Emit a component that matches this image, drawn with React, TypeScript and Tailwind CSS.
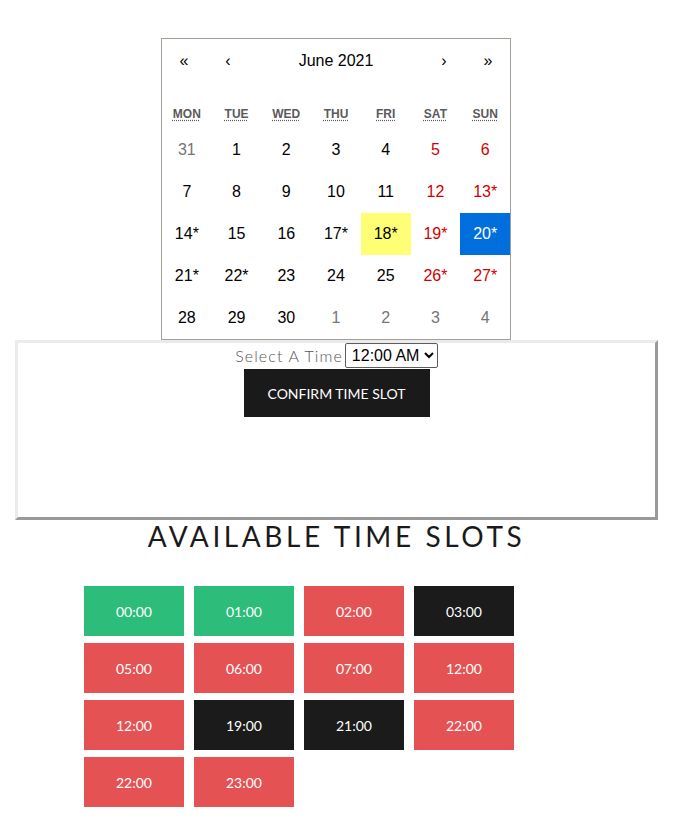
import React from "react";

type Day = { n: number; star?: boolean; muted?: boolean; weekend?: boolean; now?: boolean; active?: boolean };

const weeks: Day[][] = [
  [{ n: 31, muted: true }, { n: 1 }, { n: 2 }, { n: 3 }, { n: 4 }, { n: 5, weekend: true }, { n: 6, weekend: true }],
  [{ n: 7 }, { n: 8 }, { n: 9 }, { n: 10 }, { n: 11 }, { n: 12, weekend: true }, { n: 13, weekend: true, star: true }],
  [
    { n: 14, star: true },
    { n: 15 },
    { n: 16 },
    { n: 17, star: true },
    { n: 18, star: true, now: true },
    { n: 19, weekend: true, star: true },
    { n: 20, weekend: true, star: true, active: true },
  ],
  [
    { n: 21, star: true },
    { n: 22, star: true },
    { n: 23 },
    { n: 24 },
    { n: 25 },
    { n: 26, weekend: true, star: true },
    { n: 27, weekend: true, star: true },
  ],
  [{ n: 28 }, { n: 29 }, { n: 30 }, { n: 1, muted: true }, { n: 2, muted: true }, { n: 3, muted: true }, { n: 4, muted: true }],
];

const weekdays = [
  ["MON", "Monday"],
  ["TUE", "Tuesday"],
  ["WED", "Wednesday"],
  ["THU", "Thursday"],
  ["FRI", "Friday"],
  ["SAT", "Saturday"],
  ["SUN", "Sunday"],
];

const slots: { time: string; status: "free" | "taken" | "mine" }[] = [
  { time: "00:00", status: "free" },
  { time: "01:00", status: "free" },
  { time: "02:00", status: "taken" },
  { time: "03:00", status: "mine" },
  { time: "05:00", status: "taken" },
  { time: "06:00", status: "taken" },
  { time: "07:00", status: "taken" },
  { time: "12:00", status: "taken" },
  { time: "12:00", status: "taken" },
  { time: "19:00", status: "mine" },
  { time: "21:00", status: "mine" },
  { time: "22:00", status: "taken" },
  { time: "22:00", status: "taken" },
  { time: "23:00", status: "taken" },
];

const slotColor = {
  free: "bg-[#2cbd7a]",
  taken: "bg-[#e55254]",
  mine: "bg-[#1b1b1b]",
};

function dayClass(d: Day) {
  if (d.active) return "bg-[#006edc] text-white";
  if (d.now) return "bg-[#ffff76] text-black";
  if (d.muted) return "text-[#757575]";
  if (d.weekend) return "text-[#d10000]";
  return "text-black";
}

const Calendar = () => (
  <div className="ml-[161px] w-[350px] border border-[#a0a096] bg-white font-['Liberation_Sans',Arial,sans-serif]">
    <div className="mb-4 flex h-[44px] text-[16px] text-black">
      <button className="w-[44px]">«</button>
      <button className="w-[44px]">‹</button>
      <button className="flex-1">June 2021</button>
      <button className="w-[44px]">›</button>
      <button className="w-[44px]">»</button>
    </div>
    <div className="grid h-[30px] grid-cols-7 items-center text-center text-[12px] font-bold text-[#5a5a5a]">
      {weekdays.map(([abbr, full]) => (
        <div key={abbr}>
          <abbr title={full} className="underline decoration-dotted underline-offset-2">
            {abbr}
          </abbr>
        </div>
      ))}
    </div>
    {weeks.map((w, i) => (
      <div key={i} className="grid grid-cols-7">
        {w.map((d, j) => (
          <button key={j} className={`flex h-[42px] items-center justify-center text-[16px] ${dayClass(d)}`}>
            {d.n}
            {d.star ? "*" : ""}
          </button>
        ))}
      </div>
    ))}
  </div>
);

export default function App() {
  return (
    <div className="min-h-screen bg-white pt-[38px]">
      <Calendar />

      <div className="mx-[15px] flex h-[180px] flex-col items-center border-[3px] border-t-[#ebebeb] border-l-[#ebebeb] border-r-[#999999] border-b-[#999999] bg-white">
        <div className="flex items-center">
          <span className="font-['Lato',sans-serif] text-[16px] font-light tracking-[1.1px] text-[#555555]">Select A Time</span>
          <select className="ml-[2px] h-[25px] rounded-[2px] border border-[#5c5c5c] bg-white pl-[2px] font-['Liberation_Sans',Arial,sans-serif] text-[16px] text-black">
            <option>12:00 AM</option>
            <option>01:00 AM</option>
            <option>02:00 AM</option>
          </select>
        </div>
        <button className="mt-px h-[48px] w-[186px] bg-[#1a1a1a] font-['Lato',sans-serif] text-[14px] text-white">
          CONFIRM TIME SLOT
        </button>
      </div>

      <h2 className="text-center font-['Lato',sans-serif] text-[28px] leading-[32px] tracking-[3.6px] text-[#1a1a1a]">
        AVAILABLE TIME SLOTS
      </h2>

      <div className="mt-[34px] ml-[84px] flex w-[440px] flex-wrap gap-x-[10px] gap-y-[7px] pb-6">
        {slots.map((s, i) => (
          <button
            key={i}
            className={`flex h-[50px] w-[100px] items-center justify-center font-['Lato',sans-serif] text-[14px] text-white ${slotColor[s.status]}`}
          >
            {s.time}
          </button>
        ))}
      </div>
    </div>
  );
}
